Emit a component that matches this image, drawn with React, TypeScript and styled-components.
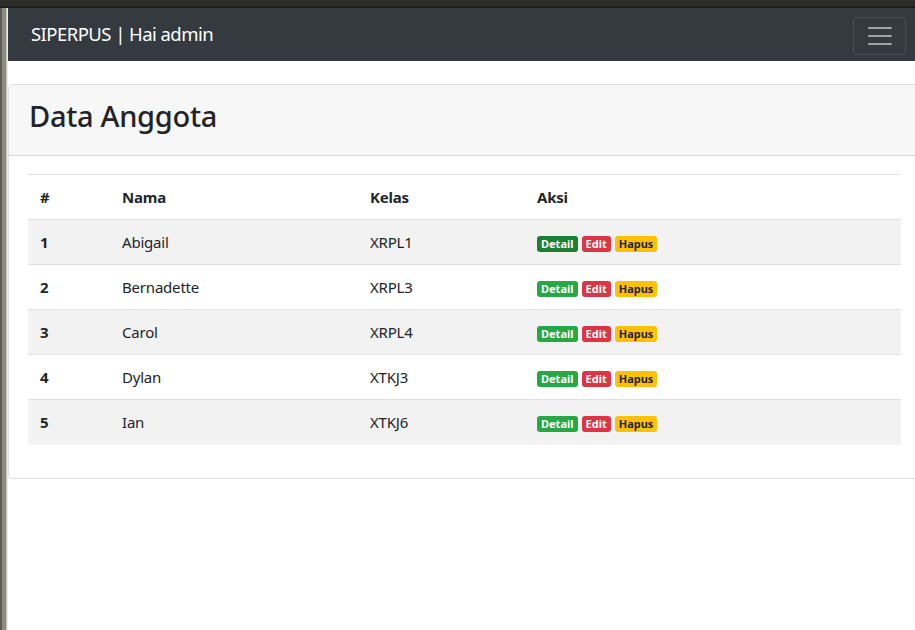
import React from "react";
import styled, { createGlobalStyle } from "styled-components";

const GlobalStyle = createGlobalStyle`
  html, body { margin: 0; padding: 0; background: #fff; overflow: hidden; }
  body { font-family: "Noto Sans", "Open Sans", Arial, sans-serif; color: #212529; }
  * { box-sizing: border-box; }
`;

const Frame = styled.div`
  width: 915px;
  height: 630px;
  display: flex;
  flex-direction: column;
  overflow: hidden;
`;

const TopStrip = styled.div`
  height: 8px;
  flex: none;
  background: linear-gradient(to bottom, #2c2c2a 0, #2c2c2a 6px, #1f1f1e 6px);
`;

const Body = styled.div`
  flex: 1;
  display: flex;
  min-height: 0;
`;

const LeftEdge = styled.div`
  width: 8px;
  flex: none;
  background: linear-gradient(to right, #5e5d58 0, #5e5d58 2px, #8e8b82 2px, #8e8b82 6px, #c9c8c4 6px, #c9c8c4 7px, #ececec 7px);
`;

const Page = styled.div`
  width: 914px;
  flex: none;
  display: flex;
  flex-direction: column;
`;

const Navbar = styled.nav`
  height: 53px;
  background: #343a40;
  display: flex;
  align-items: center;
  justify-content: space-between;
  padding: 0 16px 0 23px;
`;

const Brand = styled.a`
  color: #fff;
  font-size: 18.5px;
  line-height: 1;
  text-decoration: none;
  letter-spacing: -0.55px;
`;

const Toggler = styled.button`
  width: 53px;
  height: 38px;
  margin-top: 2px;
  border: 1px solid rgba(255, 255, 255, 0.1);
  border-radius: 4px;
  background: transparent;
  display: flex;
  align-items: center;
  justify-content: center;
  padding: 0;
`;

const Card = styled.section`
  margin-top: 23px;
  border: 1px solid rgba(0, 0, 0, 0.125);
  border-radius: 4px;
  overflow: hidden;
`;

const CardHeader = styled.header`
  height: 71px;
  background: #f7f7f7;
  border-bottom: 1px solid rgba(0, 0, 0, 0.125);
  padding: 0 20px 10px;
  display: flex;
  align-items: center;
`;

const Title = styled.h2`
  margin: 0;
  font-size: 29px;
  font-weight: 500;
  line-height: 1;
  letter-spacing: -0.3px;
  color: #212529;
`;

const CardBody = styled.div`
  padding: 18px 20px 33px 19px;
`;

const Table = styled.table`
  width: 873px;
  border-collapse: collapse;
  font-size: 15px;
  letter-spacing: -0.2px;
  color: #212529;
`;

const Th = styled.th<{ $w?: number }>`
  text-align: left;
  font-weight: 700;
  height: 45px;
  padding: 0 12px;
  border-top: 1px solid #dee2e6;
  border-bottom: 1px solid #dee2e6;
  width: ${(p) => (p.$w ? `${p.$w}px` : "auto")};
`;

const Tr = styled.tr<{ $striped: boolean }>`
  background: ${(p) => (p.$striped ? "#f2f2f2" : "#fff")};
`;

const Td = styled.td<{ $bold?: boolean }>`
  height: 45px;
  padding: 0 12px;
  border-top: 1px solid #dee2e6;
  font-weight: ${(p) => (p.$bold ? 700 : 400)};
  vertical-align: middle;
`;

const Actions = styled.div`
  display: flex;
  gap: 4px;
  align-items: center;
  padding-top: 3px;
`;

const variants = {
  success: { bg: "#28a745", fg: "#fff" },
  successDark: { bg: "#1e7e34", fg: "#fff" },
  danger: { bg: "#dc3545", fg: "#fff" },
  warning: { bg: "#ffc107", fg: "#212529" },
};

const Badge = styled.a<{ $v: keyof typeof variants }>`
  display: inline-block;
  background: ${(p) => variants[p.$v].bg};
  color: ${(p) => variants[p.$v].fg};
  font-size: 11px;
  font-weight: 700;
  line-height: 1;
  letter-spacing: 0;
  padding: 2px 4px 3px;
  border-radius: 3px;
  text-decoration: none;
`;

const rows = [
  { id: 1, nama: "Abigail", kelas: "XRPL1" },
  { id: 2, nama: "Bernadette", kelas: "XRPL3" },
  { id: 3, nama: "Carol", kelas: "XRPL4" },
  { id: 4, nama: "Dylan", kelas: "XTKJ3" },
  { id: 5, nama: "Ian", kelas: "XTKJ6" },
];

const HamburgerIcon = () => (
  <svg width="30" height="30" viewBox="0 0 30 30">
    <path
      d="M4 7h22M4 15h22M4 23h22"
      stroke="rgba(255,255,255,0.55)"
      strokeWidth="2"
      strokeLinecap="round"
    />
  </svg>
);

export default function App() {
  return (
    <>
      <GlobalStyle />
      <Frame>
        <TopStrip />
        <Body>
          <LeftEdge />
          <Page>
            <Navbar>
              <Brand href="#">SIPERPUS | Hai admin</Brand>
              <Toggler aria-label="Toggle navigation">
                <HamburgerIcon />
              </Toggler>
            </Navbar>
            <Card>
              <CardHeader>
                <Title>Data Anggota</Title>
              </CardHeader>
              <CardBody>
                <Table>
                  <thead>
                    <tr>
                      <Th $w={82}>#</Th>
                      <Th $w={248}>Nama</Th>
                      <Th $w={167}>Kelas</Th>
                      <Th>Aksi</Th>
                    </tr>
                  </thead>
                  <tbody>
                    {rows.map((r, i) => (
                      <Tr key={r.id} $striped={i % 2 === 0}>
                        <Td $bold>{r.id}</Td>
                        <Td>{r.nama}</Td>
                        <Td>{r.kelas}</Td>
                        <Td>
                          <Actions>
                            <Badge href="#" $v={i === 0 ? "successDark" : "success"}>Detail</Badge>
                            <Badge href="#" $v="danger">Edit</Badge>
                            <Badge href="#" $v="warning">Hapus</Badge>
                          </Actions>
                        </Td>
                      </Tr>
                    ))}
                  </tbody>
                </Table>
              </CardBody>
            </Card>
          </Page>
        </Body>
      </Frame>
    </>
  );
}
